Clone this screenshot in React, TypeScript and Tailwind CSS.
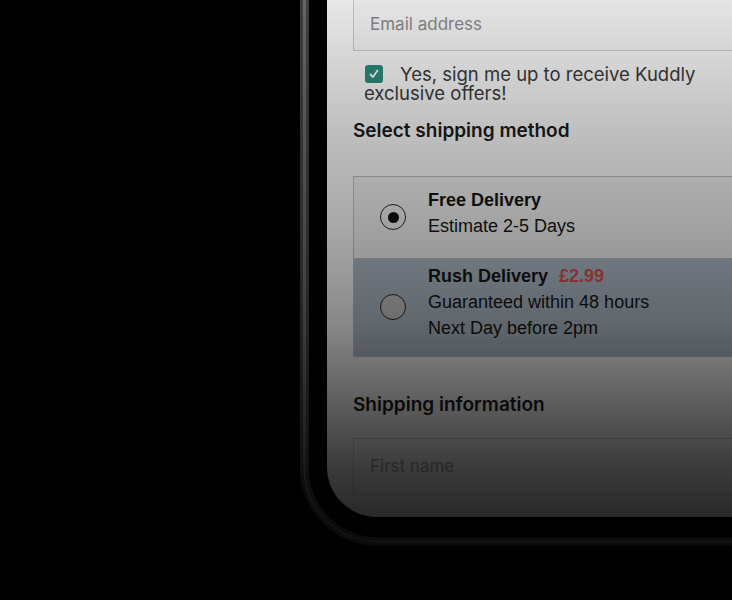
import React from "react";

function Radio({ checked, fill }: { checked?: boolean; fill: string }) {
  return (
    <div
      className={`w-[26px] h-[26px] rounded-full border-[1.5px] border-[#2a2a2a] flex items-center justify-center ${fill}`}
    >
      {checked && <div className="w-[11px] h-[11px] rounded-full bg-[#111]" />}
    </div>
  );
}

export default function App() {
  return (
    <div className="relative w-[732px] h-[600px] bg-black overflow-hidden" style={{ fontFamily: "Inter, 'Noto Sans', sans-serif" }}>
      <div className="flex items-start">
        <div className="ml-[300px] mt-[-100px] w-[560px] shrink-0 rounded-bl-[78px] border-[3px] border-[#444]">
          <div className="rounded-bl-[75px] border-[3px] border-[#707070]">
            <div className="rounded-bl-[72px] border-[3px] border-[#444]">
              <div className="rounded-bl-[69px] bg-black p-[18px] pb-[20px]">
                <div className="bg-white rounded-bl-[50px] overflow-hidden pl-[26px] pt-[68px] pb-[22px]">
                  {/* Email */}
                  <div className="h-[56px] border border-[#cfcfcf] bg-[#fbfbfb] flex items-center pl-[16px] pt-[4px]">
                    <span className="text-[17px] text-[#8e8e8e]">Email address</span>
                  </div>
                  {/* Checkbox */}
                  <p className="mt-[14px] w-[365px] pl-[11px] text-[18.5px] leading-[19px] text-[#3c3c3c]">
                    <span className="inline-flex align-[1px] items-center justify-center w-[18px] h-[18px] rounded-[3px] bg-[#2f8d80] mr-[17px] ml-[1px]">
                      <svg width="12" height="12" viewBox="0 0 12 12" fill="none">
                        <path d="M2.5 6.5 L5 9 L9.5 2.5" stroke="white" strokeWidth="1.8" strokeLinecap="round" strokeLinejoin="round" />
                      </svg>
                    </span>
                    Yes, sign me up to receive Kuddly exclusive offers!
                  </p>
                  <h2 className="mt-[16px] text-[19px] leading-[24px] font-semibold text-[#1c1c1c]">Select shipping method</h2>
                  {/* Options */}
                  <div className="mt-[33px] border border-[#c4c4c4]" style={{ fontFamily: "'Liberation Sans', Arial, sans-serif" }}>
                    <div className="flex bg-[#f6f6f6] pt-[10px] pb-[19px] pl-[26px]">
                      <div className="mt-[17px]">
                        <Radio checked fill="bg-[#f6f6f6]" />
                      </div>
                      <div className="ml-[22px] text-[18px] leading-[26px] text-[#151515]">
                        <div className="font-bold">Free Delivery</div>
                        <div>Estimate 2-5 Days</div>
                      </div>
                    </div>
                    <div className="flex bg-[#b3c0cc] pt-[5px] pb-[15px] pl-[26px]">
                      <div className="mt-[31px]">
                        <Radio fill="bg-[#cbcbcb]" />
                      </div>
                      <div className="ml-[22px] text-[18px] leading-[26px] text-[#151515]">
                        <div>
                          <span className="font-bold">Rush Delivery</span>
                          <span className="font-bold text-[#e05353] ml-[11px]">£2.99</span>
                        </div>
                        <div>Guaranteed within 48 hours</div>
                        <div>Next Day before 2pm</div>
                      </div>
                    </div>
                  </div>
                  <h2 className="mt-[36px] text-[19px] leading-[24px] font-semibold text-[#1c1c1c]">Shipping information</h2>
                  <div className="mt-[21px] h-[57px] border border-[#d6d6d6] flex items-center pl-[16px]">
                    <span className="text-[17px] text-[#a8a8a8]">First name</span>
                  </div>
                </div>
              </div>
            </div>
          </div>
        </div>
      </div>
      <div className="pointer-events-none absolute inset-0 bg-[linear-gradient(to_bottom,rgba(0,0,0,0.09)_0%,rgba(0,0,0,0.25)_21.7%,rgba(0,0,0,0.33)_35.8%,rgba(0,0,0,0.4)_46%,rgba(0,0,0,0.48)_55%,rgba(0,0,0,0.64)_67.3%,rgba(0,0,0,0.77)_77.8%,rgba(0,0,0,0.83)_85%,rgba(0,0,0,0.88)_100%)]" />
    </div>
  );
}
